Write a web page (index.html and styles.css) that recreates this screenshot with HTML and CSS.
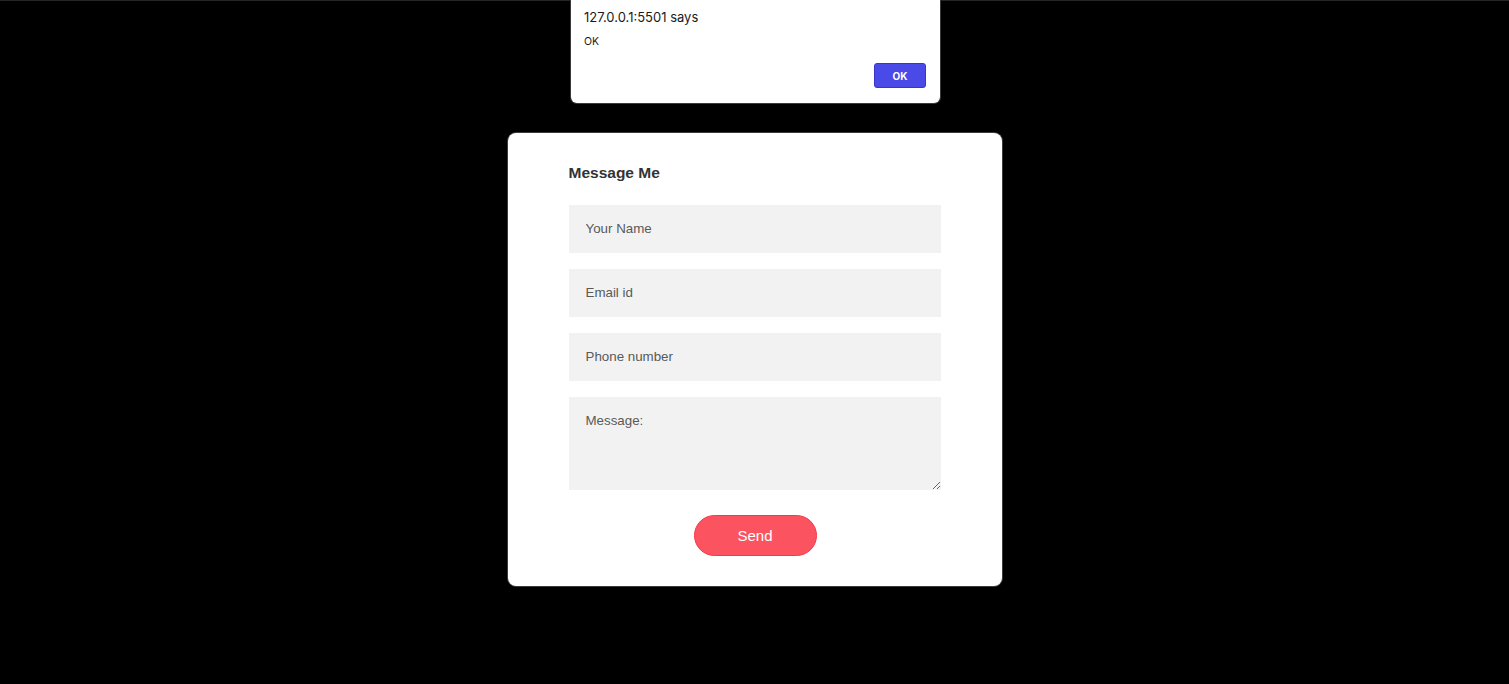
FILE: index.html
```html
<!DOCTYPE html>
<html lang="en">
<head>
<meta charset="utf-8">
<title>Message Me</title>
<link rel="stylesheet" href="styles.css">
</head>
<body>
<div class="page">
  <div class="alert">
    <p class="alert-title">127.0.0.1:5501 says</p>
    <p class="alert-msg">OK</p>
    <div class="alert-actions"><button class="alert-ok" type="button">OK</button></div>
  </div>
  <form class="card">
    <h2 class="card-title">Message Me</h2>
    <input class="field" type="text" placeholder="Your Name">
    <input class="field" type="email" placeholder="Email id">
    <input class="field" type="tel" placeholder="Phone number">
    <textarea class="field area" placeholder="Message:"></textarea>
    <div class="actions"><button class="send" type="button">Send</button></div>
  </form>
</div>
</body>
</html>
```

FILE: styles.css
```css
* { box-sizing: border-box; }
html, body { margin: 0; height: 100%; background: #000; }
body { font-family: "Liberation Sans", Arial, sans-serif; }
.page {
  position: relative;
  min-height: 100%;
  border-top: 1px solid #262626;
  padding-top: 132px;
}
.alert {
  position: absolute;
  top: -1px;
  left: 571px;
  width: 369px;
  height: 103px;
  background: #fff;
  border-radius: 0 0 6px 6px;
  box-shadow: 0 0 0 1px #3a3a3a, 0 2px 6px rgba(0,0,0,.5);
  padding: 9px 13px 0 13px;
  font-family: Inter, "Liberation Sans", sans-serif;
  color: #1b1b1b;
}
.alert-title { margin: 0; font-size: 13px; line-height: 16px; }
.alert-msg { margin: 10px 0 0; font-size: 10.5px; line-height: 14px; }
.alert-actions { display: flex; justify-content: flex-end; margin-top: 14px; }
.alert-ok {
  width: 52px; height: 25px;
  margin-right: 1px;
  background: #4a4ae9;
  border: 1px solid #3636c8;
  border-radius: 3px;
  color: #fff;
  font: 700 10px Inter, "Liberation Sans", sans-serif;
}
.card {
  width: 494px;
  margin: 0 auto;
  background: #fff;
  border-radius: 8px;
  box-shadow: 0 0 0 1px #3c3c3c;
  padding: 30px 61px 30px;
  display: flex;
  flex-direction: column;
}
.card-title {
  margin: 0 0 22px;
  font-size: 15.5px;
  line-height: 20px;
  font-weight: 700;
  color: #333;
}
.field {
  display: block;
  width: 100%;
  height: 48px;
  margin: 0 0 16px;
  border: 0;
  background: #f2f2f2;
  padding: 0 17px 1px;
  font: 13.333px "Liberation Sans", Arial, sans-serif;
  color: #333;
  outline: none;
}
.field::placeholder { color: #595959; }
.area {
  height: 93px;
  margin-bottom: 25px;
  padding: 16px 17px;
  resize: vertical;
}
.actions { display: flex; justify-content: center; padding-left: 1px; }
.send {
  width: 123px;
  height: 41px;
  background: #fc5360;
  border: 1px solid #f23a4a;
  border-radius: 21px;
  color: #fff;
  font: 15px "Liberation Sans", Arial, sans-serif;
}
```
